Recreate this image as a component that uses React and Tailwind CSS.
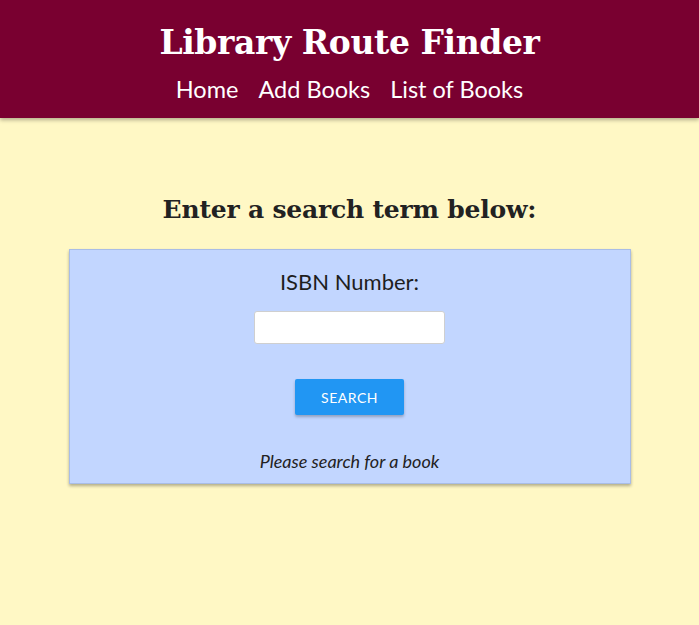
import React, { useState } from 'react';

function App() {
  const [isbn, setIsbn] = useState('');

  return (
    <div className="min-h-screen bg-[#fff8c5] font-['Lato','Noto_Sans',sans-serif]">
      <header className="bg-[#790030] h-[118px] flex flex-col items-center pt-[20px] shadow-[0_2px_4px_rgba(0,0,0,0.3)] relative z-10">
        <h1 className="font-['DejaVu_Serif',serif] font-bold text-white text-[33px] leading-[46px] tracking-[-0.4px]">
          Library Route Finder
        </h1>
        <nav className="flex gap-[20px] text-white text-[23.5px] leading-[30px] mt-[8px]">
          <a href="#">Home</a>
          <a href="#">Add Books</a>
          <a href="#">List of Books</a>
        </nav>
      </header>

      <main className="flex flex-col items-center pt-[70px]">
        <h2 className="font-['DejaVu_Serif',serif] font-bold text-[#222] text-[25px] leading-[44px] tracking-[-0.2px]">
          Enter a search term below:
        </h2>

        {/* Search card */}
        <div className="mt-[17px] w-[562px] h-[235px] bg-[#c2d6ff] border border-[#a9bde6] shadow-[0_2px_3px_rgba(0,0,0,0.3)] flex flex-col items-center">
          <label className="text-[#1e1e1e] text-[22px] leading-[26px] mt-[19px]">ISBN Number:</label>
          <input
            type="text"
            value={isbn}
            onChange={e => setIsbn(e.target.value)}
            className="mt-[16px] w-[191px] h-[33px] bg-white border border-[#cfcfcf] rounded-[3px] px-2 text-sm outline-none"
          />
          <button className="mt-[35px] w-[109px] h-[36px] bg-[#2196f3] text-white text-[14px] uppercase tracking-[0.5px] rounded-[2px] shadow-[0_2px_3px_rgba(0,0,0,0.25)]">
            Search
          </button>
          <p className="italic text-[#222] text-[18px] leading-[22px] mt-[35px]">Please search for a book</p>
        </div>
      </main>
    </div>
  );
}

export default App;
